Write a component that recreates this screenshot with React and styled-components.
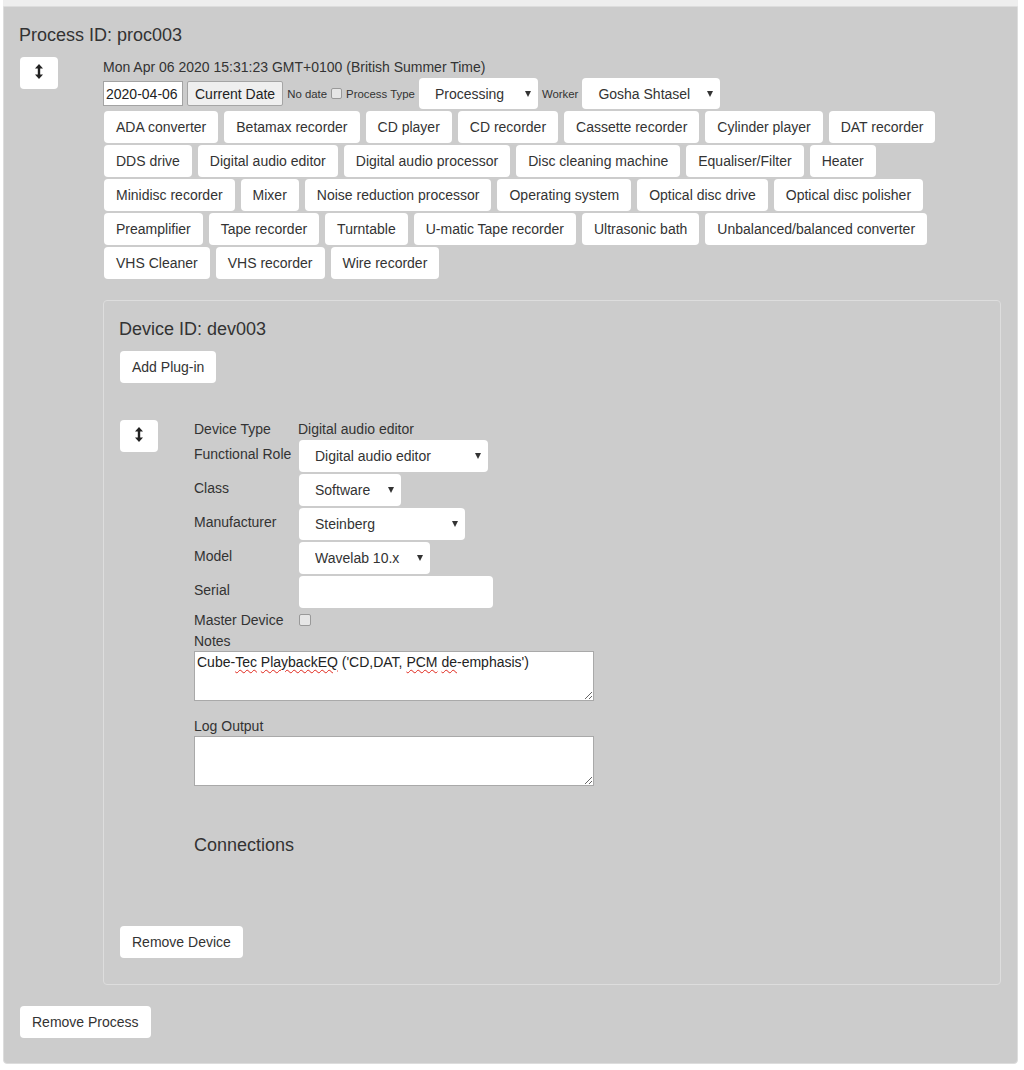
import React from "react";
import styled, { createGlobalStyle } from "styled-components";

const deviceTypes = [
  "ADA converter",
  "Betamax recorder",
  "CD player",
  "CD recorder",
  "Cassette recorder",
  "Cylinder player",
  "DAT recorder",
  "DDS drive",
  "Digital audio editor",
  "Digital audio processor",
  "Disc cleaning machine",
  "Equaliser/Filter",
  "Heater",
  "Minidisc recorder",
  "Mixer",
  "Noise reduction processor",
  "Operating system",
  "Optical disc drive",
  "Optical disc polisher",
  "Preamplifier",
  "Tape recorder",
  "Turntable",
  "U-matic Tape recorder",
  "Ultrasonic bath",
  "Unbalanced/balanced converter",
  "VHS Cleaner",
  "VHS recorder",
  "Wire recorder",
];

function ResizeIcon() {
  //* glyph de flecha vertical doble
  return (
    <svg width="8" height="15" viewBox="0 0 8 15">
      <polygon points="4,0 8,4.5 0,4.5" fill="#222" />
      <rect x="2.8" y="4" width="2.4" height="7" fill="#222" />
      <polygon points="0,10.5 8,10.5 4,15" fill="#222" />
    </svg>
  );
}

function Dropdown({ value, width, height = 32, offset = 0 }) {
  return (
    <SelectWrap $w={width} $ml={offset}>
      <Select $h={height} defaultValue={value}>
        <option>{value}</option>
      </Select>
    </SelectWrap>
  );
}

function App() {
  return (
    <>
      <GlobalStyle />
      <Page>
        <PrevEdge />
        <ProcessPanel>
          <Heading>Process ID: proc003</Heading>
          <ProcessBody $gap={45}>
            <ToggleButton>
              <ResizeIcon />
            </ToggleButton>
            <Column>
              <DateLine>Mon Apr 06 2020 15:31:23 GMT+0100 (British Summer Time)</DateLine>
              <Controls>
                <DateInput type="text" defaultValue="2020-04-06" />
                <PlainButton>Current Date</PlainButton>
                <SmallText>No date</SmallText>
                <Check type="checkbox" $s={11} />
                <SmallText>Process Type</SmallText>
                <Dropdown value="Processing" width={119} height={31} />
                <SmallText>Worker</SmallText>
                <Dropdown value="Gosha Shtasel" width={138} height={31} />
              </Controls>
              <TypeList>
                {deviceTypes.map((t) => (
                  <Button key={t}>{t}</Button>
                ))}
              </TypeList>

              <DevicePanel>
                <Heading>Device ID: dev003</Heading>
                <Button $mt={12} $ml={1}>Add Plug-in</Button>
                <ProcessBody $gap={36} $mt={37}>
                  <ToggleButton>
                    <ResizeIcon />
                  </ToggleButton>
                  <Form>
                    <FieldGrid>
                      <Label $lh={18}>Device Type</Label>
                      <Label $lh={18}>Digital audio editor</Label>
                      <FieldLabel>Functional Role</FieldLabel>
                      <Dropdown value="Digital audio editor" width={189} offset={1} />
                      <FieldLabel>Class</FieldLabel>
                      <Dropdown value="Software" width={102} offset={1} />
                      <FieldLabel>Manufacturer</FieldLabel>
                      <Dropdown value="Steinberg" width={166} offset={1} />
                      <FieldLabel>Model</FieldLabel>
                      <Dropdown value="Wavelab 10.x" width={131} offset={1} />
                      <FieldLabel>Serial</FieldLabel>
                      <TextInput type="text" />
                      <Label>Master Device</Label>
                      <Check type="checkbox" $s={12} $ml={1} />
                    </FieldGrid>
                    <Label $mt={1}>Notes</Label>
                    <TextBox role="textbox">
                      Cube-<Typo>Tec</Typo> <Typo>PlaybackEQ</Typo> ('CD,DAT,{" "}
                      <Typo>PCM</Typo> <Typo>de</Typo>-emphasis')
                    </TextBox>
                    <Label $mt={15}>Log Output</Label>
                    <LogArea />
                    <SubHeading>Connections</SubHeading>
                  </Form>
                </ProcessBody>
                <Button $mt={71} $ml={1}>Remove Device</Button>
              </DevicePanel>
            </Column>
          </ProcessBody>
          <Button $mt={21} $ml={1}>Remove Process</Button>
        </ProcessPanel>
      </Page>
    </>
  );
}
export default App;

const GlobalStyle = createGlobalStyle`
  body {
    margin: 0;
    background: #fff;
    font-family: "Liberation Sans", Arial, sans-serif;
    color: #333;
  }
  * { box-sizing: border-box; }
`;

const Page = styled.div`
  margin: 0 6px 0 3px;
`;

const PrevEdge = styled.div`
  height: 6px;
  background: #eee;
`;

const ProcessPanel = styled.section`
  background: #ccc;
  border: 1px solid #ddd;
  border-radius: 0 0 4px 4px;
  padding: 18px 16px 25px 15px;
`;

const Heading = styled.h2`
  margin: 0;
  font-size: 18px;
  line-height: 20px;
  font-weight: normal;
  color: #333;
`;

const SubHeading = styled(Heading)`
  margin-top: 49px;
`;

const ProcessBody = styled.div`
  display: flex;
  align-items: flex-start;
  gap: ${(p) => p.$gap}px;
  margin-top: ${(p) => p.$mt ?? 12}px;
  margin-left: 1px;
`;

const Column = styled.div`
  flex: 1;
  min-width: 0;
`;

const Button = styled.button`
  display: block;
  margin-top: ${(p) => p.$mt ?? 0}px;
  margin-left: ${(p) => p.$ml ?? 0}px;
  padding: 6px 12px;
  border: 0;
  border-radius: 4px;
  background: #fff;
  font-family: inherit;
  font-size: 14px;
  line-height: 20px;
  color: #333;
  white-space: nowrap;
  cursor: pointer;
`;

const ToggleButton = styled(Button)`
  display: flex;
  align-items: center;
  justify-content: center;
  flex: none;
  width: 38px;
  height: 32px;
  padding: 0 0 3px;
`;

const DateLine = styled.div`
  font-size: 14px;
  line-height: 20px;
`;

const Controls = styled.div`
  display: flex;
  align-items: center;
  gap: 4px;
  margin-top: 1px;
`;

const DateInput = styled.input`
  width: 80px;
  height: 25px;
  padding: 0 2px;
  border: 1px solid #a3a3a3;
  background: #fff;
  font-family: inherit;
  font-size: 14px;
  color: #222;
`;

const PlainButton = styled.button`
  height: 25px;
  padding: 0 7px;
  border: 1px solid #a5a5a5;
  border-radius: 2px;
  background: #efefef;
  font-family: inherit;
  font-size: 14px;
  color: #222;
`;

const SmallText = styled.span`
  font-size: 11.4px;
  color: #333;
  padding-top: 1px;
`;

const Check = styled.input`
  appearance: none;
  margin: 0 0 0 ${(p) => p.$ml ?? 0}px;
  width: ${(p) => p.$s}px;
  height: ${(p) => p.$s}px;
  border: 1px solid #999;
  border-radius: 2px;
  background: #e6e6e6;
`;

const SelectWrap = styled.span`
  position: relative;
  display: inline-flex;
  width: ${(p) => p.$w}px;
  margin-left: ${(p) => p.$ml}px;

  &::after {
    content: "";
    position: absolute;
    right: 7px;
    top: 50%;
    margin-top: -3px;
    border-left: 3.5px solid transparent;
    border-right: 3.5px solid transparent;
    border-top: 6px solid #333;
    pointer-events: none;
  }
`;

const Select = styled.select`
  appearance: none;
  width: 100%;
  height: ${(p) => p.$h}px;
  padding: 0 22px 0 16px;
  border: 0;
  border-radius: 4px;
  background: #fff;
  font-family: inherit;
  font-size: 14px;
  color: #333;
`;

const TypeList = styled.div`
  display: flex;
  flex-wrap: wrap;
  gap: 2px 6px;
  margin-top: 2px;
  padding-left: 1px;
`;

const DevicePanel = styled.div`
  margin-top: 21px;
  border: 1px solid #ddd;
  border-radius: 4px;
  padding: 18px 16px 26px 15px;
`;

const Form = styled.div`
  display: flex;
  flex-direction: column;
  align-items: flex-start;
`;

const FieldGrid = styled.div`
  display: grid;
  grid-template-columns: 104px auto;
  grid-template-rows: 18px repeat(5, 32px) 20px;
  row-gap: 2px;
  align-items: center;
  justify-items: start;
`;

const Label = styled.div`
  margin-top: ${(p) => p.$mt ?? 0}px;
  font-size: 14px;
  line-height: ${(p) => p.$lh ?? 20}px;
  color: #333;
  white-space: nowrap;
`;

const FieldLabel = styled(Label)`
  padding-bottom: 4px;
`;

const TextInput = styled.input`
  width: 194px;
  height: 32px;
  margin-left: 1px;
  border: 0;
  border-radius: 4px;
  background: #fff;
  font-family: inherit;
  font-size: 14px;
`;

const TextBox = styled.div`
  width: 400px;
  height: 50px;
  padding: 2px;
  border: 1px solid #a9a9a9;
  background: #fff;
  font-size: 14px;
  line-height: normal;
  color: #222;
  overflow: auto;
  resize: both;
`;

const LogArea = styled.textarea`
  display: block;
  width: 400px;
  height: 50px;
  margin: 0;
  padding: 2px;
  border: 1px solid #a9a9a9;
  background: #fff;
  font-family: inherit;
  font-size: 14px;
`;

const Typo = styled.span`
  text-decoration: underline wavy #e0261b;
  text-decoration-thickness: 1px;
  text-underline-offset: 2px;
`;
